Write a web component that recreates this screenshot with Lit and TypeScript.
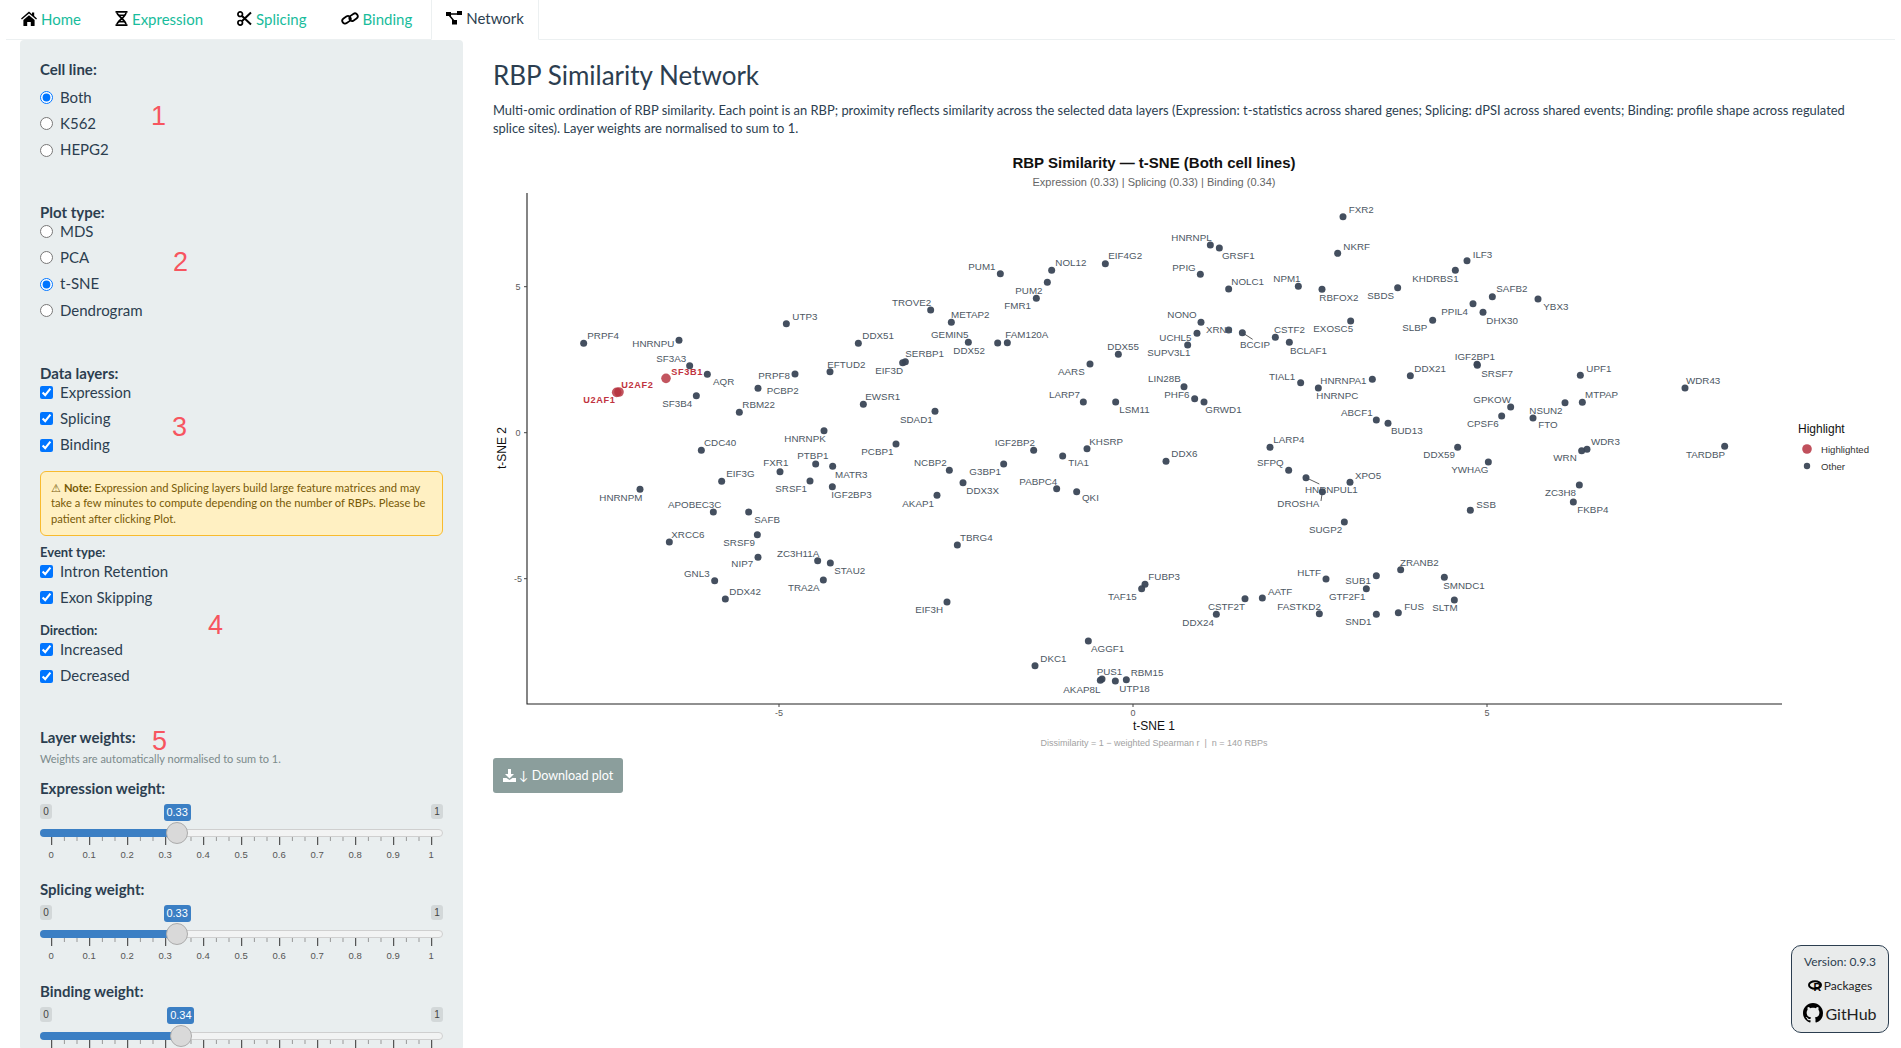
import { LitElement, html, svg, css } from 'lit';
import { customElement, property } from 'lit/decorators.js';

// [name, point x, point y, label left, label mid y]
type Row = [string, number, number, number, number];
type Spot = { name: string; x: number; y: number; lx: number; ly: number };

// values were read off 3x crops, so they get divided back down here
const spots = (ox: number, oy: number, rows: Row[]): Spot[] =>
  rows.map(([name, x, y, lx, ly]) => ({
    name,
    x: ox + x / 3,
    y: oy + y / 3,
    lx: ox + lx / 3,
    ly: oy + ly / 3,
  }));

const RED_POINTS = spots(490, 150, [
  ['SF3B1', 528, 685, 544, 666],
  ['U2AF2', 387, 726, 394, 705],
  ['U2AF1', 380, 727, 280, 750],
]);

const POINTS = [
  ...spots(490, 150, [
    ['PRPF4', 281, 580, 292, 557],
    ['HNRNPU', 567, 571, 427, 581],
    ['SF3A3', 599, 647, 499, 626],
    ['AQR', 652, 673, 669, 695],
    ['SF3B4', 619, 737, 517, 761],
    ['RBM22', 748, 787, 757, 764],
    ['PCBP2', 804, 715, 830, 722],
    ['PRPF8', 915, 672, 805, 677],
    ['UTP3', 889, 521, 907, 500],
    ['DDX51', 1105, 580, 1117, 557],
    ['EFTUD2', 1020, 665, 1012, 644],
    ['EIF3D', 1238, 638, 1156, 662],
    ['SERBP1', 1246, 635, 1246, 611],
    ['TROVE2', 1322, 480, 1206, 458],
    ['METAP2', 1384, 517, 1383, 494],
    ['GEMIN5', 1435, 577, 1323, 554],
    ['DDX52', 1523, 579, 1390, 602],
    ['EWSR1', 1120, 763, 1126, 740],
    ['SDAD1', 1335, 784, 1230, 809],
    ['HNRNPK', 1002, 842, 883, 866],
    ['CDC40', 634, 901, 642, 878],
  ]),
  ...spots(490, 440, [
    ['PCBP1', 1218, 12, 1114, 35],
    ['NCBP2', 1378, 91, 1272, 68],
    ['FXR1', 870, 95, 820, 68],
    ['PTBP1', 977, 72, 922, 47],
    ['MATR3', 1028, 79, 1035, 104],
    ['EIF3G', 695, 124, 709, 101],
    ['SRSF1', 960, 123, 856, 146],
    ['IGF2BP3', 1027, 140, 1024, 164],
    ['HNRNPM', 450, 148, 328, 173],
    ['APOBEC3C', 670, 216, 534, 194],
    ['SAFB', 776, 216, 793, 239],
    ['AKAP1', 1341, 166, 1237, 189],
    ['XRCC6', 538, 306, 544, 284],
    ['SRSF9', 802, 284, 700, 308],
    ['NIP7', 804, 352, 724, 371],
    ['ZC3H11A', 983, 362, 861, 339],
    ['STAU2', 1021, 369, 1033, 392],
    ['TRA2A', 1000, 420, 894, 443],
    ['GNL3', 674, 422, 582, 401],
    ['DDX42', 706, 477, 718, 455],
    ['EIF3H', 1371, 486, 1276, 509],
    ['TBRG4', 1402, 315, 1410, 293],
  ]),
  ...spots(960, 430, [
    ['G3BP1', 131, 102, 28, 125],
    ['DDX3X', 9, 158, 19, 182],
    ['IGF2BP2', 221, 61, 104, 38],
    ['KHSRP', 381, 56, 388, 35],
    ['TIA1', 308, 78, 325, 98],
    ['PABPC4', 290, 176, 178, 155],
    ['QKI', 350, 185, 366, 203],
    ['DDX6', 618, 94, 634, 71],
    ['LARP4', 930, 52, 940, 29],
    ['SFPQ', 986, 121, 891, 98],
    ['HNRNPUL1', 1038, 143, 1035, 179],
    ['DROSHA', 1087, 185, 952, 221],
    ['XPO5', 1170, 157, 1185, 137],
    ['SUGP2', 1153, 276, 1047, 299],
    ['DDX59', 1493, 52, 1390, 74],
    ['FUBP3', 555, 463, 565, 440],
    ['TAF15', 545, 476, 444, 500],
    ['ZRANB2', 1322, 419, 1320, 398],
    ['HLTF', 1098, 447, 1012, 428],
    ['SUB1', 1249, 437, 1156, 452],
    ['SMNDC1', 1453, 442, 1450, 467],
    ['GTF2F1', 1219, 476, 1107, 500],
    ['AATF', 907, 504, 924, 485],
    ['CSTF2T', 855, 506, 744, 530],
    ['FASTKD2', 1078, 551, 952, 530],
    ['SLTM', 1483, 510, 1417, 533],
    ['FUS', 1315, 548, 1333, 530],
    ['SND1', 1249, 553, 1156, 575],
    ['DDX24', 769, 553, 667, 578],
    ['AGGF1', 385, 633, 393, 656],
    ['DKC1', 225, 707, 241, 686],
    ['PUS1', 426, 747, 410, 725],
    ['AKAP8L', 421, 751, 310, 777],
    ['RBM15', 499, 749, 512, 728],
    ['UTP18', 466, 753, 478, 776],
  ]),
  ...spots(960, 150, [
    ['FXR2', 1149, 200, 1166, 179],
    ['NKRF', 1133, 310, 1150, 290],
    ['HNRNPL', 751, 285, 634, 263],
    ['GRSF1', 778, 294, 786, 317],
    ['EIF4G2', 436, 341, 445, 317],
    ['PUM1', 121, 371, 25, 350],
    ['NOL12', 275, 361, 286, 338],
    ['PUM2', 262, 397, 166, 422],
    ['FMR1', 229, 445, 133, 467],
    ['PPIG', 721, 373, 637, 353],
    ['NOLC1', 806, 417, 814, 395],
    ['NPM1', 1015, 409, 940, 386],
    ['RBFOX2', 1086, 418, 1078, 442],
    ['SBDS', 1313, 413, 1222, 437],
    ['KHDRBS1', 1486, 361, 1357, 386],
    ['EXOSC5', 1172, 513, 1060, 536],
    ['SLBP', 1418, 511, 1327, 533],
    ['NONO', 723, 517, 622, 494],
    ['XRN2', 806, 540, 738, 539],
    ['UCHL5', 711, 550, 598, 563],
    ['BCCIP', 847, 548, 840, 584],
    ['SUPV3L1', 683, 585, 562, 608],
    ['CSTF2', 946, 562, 942, 539],
    ['BCLAF1', 988, 577, 990, 602],
    ['FAM120A', 142, 578, 136, 554],
    ['DDX55', 475, 613, 442, 590],
    ['AARS', 390, 642, 294, 665],
    ['LIN28B', 672, 710, 564, 686],
    ['PHF6', 704, 746, 613, 734],
    ['GRWD1', 732, 756, 736, 779],
    ['LARP7', 370, 756, 267, 734],
    ['LSM11', 467, 756, 478, 779],
    ['TIAL1', 1022, 698, 927, 678],
    ['HNRNPA1', 1237, 688, 1081, 692],
    ['HNRNPC', 1075, 714, 1069, 737],
    ['DDX21', 1351, 677, 1363, 656],
    ['ABCF1', 1249, 810, 1143, 788],
    ['BUD13', 1284, 820, 1293, 842],
  ]),
  ...spots(1420, 200, [
    ['ILF3', 141, 182, 158, 164],
    ['SAFB2', 217, 290, 229, 266],
    ['YBX3', 354, 297, 370, 320],
    ['PPIL4', 159, 311, 64, 335],
    ['DHX30', 189, 337, 199, 362],
    ['IGF2BP1', 171, 493, 104, 470],
    ['SRSF7', 172, 496, 184, 521],
    ['UPF1', 481, 526, 499, 506],
    ['WDR43', 795, 564, 798, 542],
    ['MTPAP', 487, 607, 495, 584],
    ['NSUN2', 435, 608, 328, 632],
    ['GPKOW', 272, 621, 160, 599],
    ['CPSF6', 245, 648, 141, 671],
    ['FTO', 339, 654, 355, 674],
    ['WDR3', 501, 748, 513, 725],
    ['WRN', 485, 752, 400, 773],
    ['TARDBP', 914, 739, 798, 764],
    ['YWHAG', 205, 786, 94, 809],
    ['ZC3H8', 478, 855, 375, 878],
    ['FKBP4', 460, 906, 472, 929],
    ['SSB', 151, 931, 169, 914],
  ]),
];

const LEADERS = [
  [960 + 847 / 3, 150 + 548 / 3, 960 + 878 / 3, 150 + 568 / 3],
  [960 + 1038 / 3, 430 + 143 / 3, 960 + 1078 / 3, 430 + 162 / 3],
  [960 + 1087 / 3, 430 + 185 / 3, 960 + 1083 / 3, 430 + 213 / 3],
];

@customElement('rbp-plot')
export class RbpPlot extends LitElement {
  static styles = css`
    :host { display: block; height: 600px; }
    svg { display: block; font-family: 'Liberation Sans', Arial, sans-serif; }
    text { dominant-baseline: central; }
    .lab { font-size: 9.8px; fill: #4d5763; }
    .lab-red { font-size: 9.2px; font-weight: 700; fill: #bf3340; letter-spacing: 0.6px; }
    .tick { font-size: 9px; fill: #5a5a5a; text-anchor: middle; }
    .axis-title { font-size: 12px; fill: #111; text-anchor: middle; }
    .title { font-size: 15px; font-weight: 700; fill: #111; text-anchor: middle; }
    .sub { font-size: 11px; fill: #666; text-anchor: middle; }
    .caption { font-size: 9px; fill: #a2a2a2; text-anchor: middle; }
    .legend { font-size: 9.6px; fill: #333; }
  `;

  render() {
    return html`
      <svg width="1400" height="600" viewBox="493 150 1400 600">
        <text class="title" x="1154" y="162.5">RBP Similarity — t-SNE (Both cell lines)</text>
        <text class="sub" x="1154" y="182">Expression (0.33) | Splicing (0.33) | Binding (0.34)</text>

        <path d="M527 193V704H1782" fill="none" stroke="#222" stroke-width="1.1" />
        ${[[5, 286.7], [0, 432.7], [-5, 578.7]].map(
          ([v, y]) => svg`
            <line x1="524" x2="527" y1=${y} y2=${y} stroke="#444" />
            <text class="tick" x="518" y=${y}>${v}</text>`,
        )}
        ${[[-5, 779], [0, 1133], [5, 1487]].map(
          ([v, x]) => svg`
            <line x1=${x} x2=${x} y1="704" y2="707" stroke="#444" />
            <text class="tick" x=${x} y="713">${v}</text>`,
        )}
        <text class="axis-title" x="1154" y="726">t-SNE 1</text>
        <text class="axis-title" transform="translate(502 448) rotate(-90)">t-SNE 2</text>
        <text class="caption" x="1154" y="743">Dissimilarity = 1 − weighted Spearman r &nbsp;|&nbsp; n = 140 RBPs</text>

        ${LEADERS.map(
          ([x1, y1, x2, y2]) => svg`<line x1=${x1} y1=${y1} x2=${x2} y2=${y2} stroke="#333" stroke-width="0.8" />`,
        )}
        ${POINTS.map(
          (p) => svg`
            <circle cx=${p.x} cy=${p.y} r="3.5" fill="#3a4656" fill-opacity="0.95" />
            <text class="lab" x=${p.lx} y=${p.ly}>${p.name}</text>`,
        )}
        ${RED_POINTS.map(
          (p) => svg`
            <circle cx=${p.x} cy=${p.y} r="4.8" fill="#b5303c" fill-opacity="0.82" />
            <text class="lab-red" x=${p.lx} y=${p.ly}>${p.name}</text>`,
        )}

        <text x="1798" y="429" style="font-size:12px" fill="#111">Highlight</text>
        <circle cx="1807" cy="449" r="4.8" fill="#c0505c" />
        <circle cx="1807" cy="466" r="3.2" fill="#46505f" />
        <text class="legend" x="1821" y="449.5">Highlighted</text>
        <text class="legend" x="1821" y="466.5">Other</text>
      </svg>
    `;
  }
}

@customElement('weight-slider')
export class WeightSlider extends LitElement {
  @property() label = '';
  @property({ type: Number }) value = 0;

  static styles = css`
    :host { display: block; margin-top: 12px; }
    .name {
      height: 20px; line-height: 18.5px;
      font-size: 15px; font-weight: 700; color: #2c3e50;
      margin-bottom: 5px;
    }
    .body { position: relative; height: 64.5px; font-family: 'Liberation Sans', Arial, sans-serif; }
    .chip {
      position: absolute; top: 0;
      width: 12px; height: 15px; line-height: 15px;
      text-align: center; font-size: 10px; color: #444;
      background: #d3d8d9; border-radius: 3px;
    }
    .track {
      position: absolute; left: 0; right: 0; top: 25px; height: 8px;
      box-sizing: border-box;
      background: #f2f3f3; border: 1px solid #cfcfcf; border-radius: 4px;
    }
    .fill {
      position: absolute; left: 0; top: 25px; height: 8px;
      background: #3b7fc4; border-radius: 4px 0 0 4px;
    }
    .bubble {
      position: absolute; top: 0;
      width: 27px; height: 17px; line-height: 17px;
      margin-left: -13.5px;
      text-align: center; font-size: 11px; color: #fff;
      background: #3b7fc4; border-radius: 3px;
    }
    .handle {
      position: absolute; top: 18px;
      width: 22px; height: 22px; margin-left: -11px;
      box-sizing: border-box;
      background: #d9d9d9; border: 1px solid #ababab; border-radius: 50%;
    }
    svg { position: absolute; left: 0; top: 33px; }
    text { font-size: 9.5px; fill: #555; text-anchor: middle; }
  `;

  render() {
    const pos = 11.7 + 380 * this.value;
    const majors = Array.from({ length: 11 }, (_, i) => i);
    return html`
      <div class="name">${this.label}</div>
      <div class="body">
        <span class="chip" style="left:0">0</span>
        <span class="chip" style="right:0">1</span>
        <span class="bubble" style="left:${pos}px">${this.value.toFixed(2)}</span>
        <div class="track"></div>
        <div class="fill" style="width:${pos}px"></div>
        <svg width="403" height="30">
          ${majors.map((i) => {
            const x = 11.7 + i * 38;
            return svg`
              <line x1=${x} x2=${x} y1="0" y2="8" stroke="#333" />
              ${i < 10
                ? svg`
                    <line x1=${x + 12.7} x2=${x + 12.7} y1="0" y2="4" stroke="#999" />
                    <line x1=${x + 25.3} x2=${x + 25.3} y1="0" y2="4" stroke="#999" />`
                : ''}
              <text x=${x - 0.5} y="21">${i === 0 ? '0' : i === 10 ? '1' : (i / 10).toFixed(1)}</text>`;
          })}
        </svg>
        <div class="handle" style="left:${pos}px"></div>
      </div>
    `;
  }
}

const homeIcon = html`<svg class="ic" width="16" height="15" viewBox="0 0 16 15"><path d="M8 .6 11 3.2V1.5h2.2v3.6L16 7.6l-.9 1L8 2.5.9 8.6 0 7.6ZM2.4 9 8 4.2 13.6 9v5.4a.6.6 0 0 1-.6.6H9.8v-4H6.2v4H3a.6.6 0 0 1-.6-.6Z" /></svg>`;
const dnaIcon = html`<svg class="ic" width="13" height="15" viewBox="0 0 13 15"><path d="M.5 0h12v1.8H.5ZM.5 13.2h12V15H.5Z" /><path d="M2 1.5c0 3.5 9 7.500 9 12M11 1.500c0 4.500-9 8.500-9 12" fill="none" stroke="#000" stroke-width="1.700" /><path d="M3 3.500h7v1.400H3ZM3 10h7v1.400H3Z" /></svg>`;
const scissorsIcon = html`<svg class="ic" width="15" height="15" viewBox="0 0 15 15"><circle cx="3.200" cy="3.200" r="2.300" fill="none" stroke="#000" stroke-width="1.700" /><circle cx="3.200" cy="11.800" r="2.300" fill="none" stroke="#000" stroke-width="1.700" /><path d="M4.800 4.800 14 13.500M4.800 10.200 14 1.500" stroke="#000" stroke-width="2" /></svg>`;
const linkIcon = html`<svg class="ic" width="18" height="15" viewBox="0 0 18 15"><g fill="none" stroke="#000" stroke-width="1.800"><rect x="1" y="6" width="9" height="5.600" rx="2.800" transform="rotate(-35 5.500 8.800)" /><rect x="8" y="3.400" width="9" height="5.600" rx="2.800" transform="rotate(-35 12.500 6.200)" /></g></svg>`;
const networkIcon = html`<svg class="ic" width="16" height="14" viewBox="0 0 16 14"><path d="M0 1h5v4H0ZM11 0h5v4h-5ZM6 9h5v4.500H6Z" /><path d="M4 3h8M3 4l5 6" stroke="#000" stroke-width="1.500" fill="none" /></svg>`;
const downloadIcon = html`<svg width="13" height="13" viewBox="0 0 13 13" fill="#fff"><path d="M5 0h3v5h3L6.500 9.500 2 5h3ZM0 9h3.500l3 2 3-2H13v4H0Z" /></svg>`;
const githubIcon = html`<svg width="20" height="20" viewBox="0 0 16 16"><path d="M8 0C3.580 0 0 3.580 0 8c0 3.540 2.290 6.530 5.470 7.590.4.070.55-.17.55-.38 0-.19-.01-.82-.01-1.490-2.010.37-2.530-.49-2.690-.94-.09-.23-.48-.94-.82-1.130-.28-.15-.68-.52-.01-.53.63-.01 1.080.58 1.230.82.720 1.210 1.870.87 2.330.66.070-.52.28-.87.51-1.070-1.780-.2-3.640-.89-3.640-3.950 0-.87.31-1.590.82-2.150-.08-.2-.36-1.020.08-2.120 0 0 .67-.21 2.200.82.64-.18 1.320-.27 2-.27.68 0 1.360.09 2 .27 1.530-1.040 2.200-.82 2.200-.82.44 1.100.16 1.920.08 2.120.51.56.82 1.270.82 2.150 0 3.070-1.870 3.750-3.650 3.950.29.25.54.73.54 1.480 0 1.070-.01 1.930-.01 2.200 0 .21.15.46.55.38A8.013 8.013 0 0 0 16 8c0-4.420-3.580-8-8-8z" /></svg>`;
const rIcon = html`<svg width="15" height="12" viewBox="0 0 15 12"><ellipse cx="7" cy="5" rx="6" ry="3.800" fill="none" stroke="#000" stroke-width="2" /><text x="5.500" y="11" font-size="10.500" font-weight="700" font-family="Liberation Sans, sans-serif">R</text></svg>`;

const TABS = [
  { label: 'Home', icon: homeIcon },
  { label: 'Expression', icon: dnaIcon },
  { label: 'Splicing', icon: scissorsIcon },
  { label: 'Binding', icon: linkIcon },
  { label: 'Network', icon: networkIcon, active: true },
];

@customElement('app-root')
export class AppRoot extends LitElement {
  static styles = css`
    :host {
      display: block;
      height: 1048px;
      overflow: hidden;
      position: relative;
      background: #fff;
      font-family: Lato, 'Noto Sans', sans-serif;
      color: #2c3e50;
    }
    .nav {
      display: flex;
      height: 39px;
      margin: 0 6px 0 6px;
      border-bottom: 1px solid #ecf0f1;
      gap: 4px;
    }
    .tab {
      display: flex;
      align-items: center;
      gap: 4px;
      box-sizing: border-box;
      height: 39px;
      padding: 0 15px 2px;
      font-size: 15px;
      color: #18bc9c;
    }
    .tab.active {
      color: #2c3e50;
      height: 40px;
      padding: 0 14px 3px;
      background: #fff;
      border: 1px solid #ecf0f1;
      border-bottom-color: #fff;
      border-top: 0;
    }
    .ic { flex: none; }

    .layout { display: flex; gap: 30px; }
    .side {
      position: relative;
      flex: none;
      box-sizing: border-box;
      width: 443px;
      height: 1010px;
      margin-left: 20px;
      padding: 20px 20px 0;
      background: #e9eeef;
      border-radius: 4px;
      overflow: hidden;
    }
    .lbl { height: 20px; line-height: 18.5px; font-size: 15px; font-weight: 700; }
    .lbl.sm { height: 18px; line-height: 17px; font-size: 13px; }
    .opt {
      display: flex;
      align-items: center;
      gap: 7px;
      height: 26.3px;
      font-size: 15px;
    }
    .opt input { margin: 0; width: 13px; height: 13px; flex: none; }
    .opt span { margin-top: -2px; }
    .cell { margin-bottom: 4.5px; }
    .gap-plot { margin-top: 39.3px; margin-bottom: -4.2px; }
    .gap-data { margin-top: 40px; margin-bottom: -4.2px; }
    .note {
      box-sizing: border-box;
      margin-top: 12.6px;
      height: 65px;
      padding: 8px 10px 0;
      font-size: 11.2px;
      line-height: 15.5px;
      color: #775a06;
      background: #fff0c2;
      border: 1px solid #f8bb2e;
      border-radius: 6px;
    }
    .event { margin-top: 8px; margin-bottom: -3.5px; }
    .direction { margin-top: 10.9px; margin-bottom: -3.2px; }
    .weights { margin-top: 38.2px; }
    .help { margin-top: 3.3px; height: 16px; line-height: 16px; font-size: 11px; color: #7b8a8b; }
    .num {
      position: absolute;
      font-family: 'Liberation Sans', Arial, sans-serif;
      font-size: 27px;
      line-height: 30px;
      color: #f7555f;
    }

    .main { flex: 1; min-width: 0; }
    h2 {
      margin: 19px 0 0;
      height: 32px;
      line-height: 32px;
      font-size: 26px;
      font-weight: 400;
    }
    p {
      margin: 9.5px 30px 0 0;
      font-size: 12.92px;
      line-height: 18px;
    }
    .plot { margin-top: 13.5px; }
    .btn {
      display: inline-flex;
      align-items: center;
      gap: 3px;
      box-sizing: border-box;
      height: 35px;
      margin-top: 8px;
      padding: 0 10px;
      font-size: 12.6px;
      color: #fff;
      background: #8b9e9c;
      border-radius: 3px;
    }

    .version {
      position: absolute;
      right: 12px;
      top: 945px;
      box-sizing: border-box;
      width: 98px;
      height: 88px;
      padding-top: 8px;
      display: flex;
      flex-direction: column;
      align-items: center;
      font-size: 12px;
      color: #2c3e50;
      background: #e9ebeb;
      border: 1px solid #2c3e50;
      border-radius: 10px;
    }
    .version span { display: flex; align-items: center; color: #222; }
    .pk { gap: 1px; margin-top: 9px; }
    .gh { gap: 2px; margin-top: 10px; font-size: 16px; }
  `;

  private options(type: string, name: string, items: string[], selected: string[]) {
    return items.map(
      (item) => html`
        <label class="opt">
          <input type=${type} name=${name} .checked=${selected.includes(item)} />
          <span>${item}</span>
        </label>
      `,
    );
  }

  render() {
    return html`
      <nav class="nav">
        ${TABS.map(
          (t) => html`<div class="tab ${t.active ? 'active' : ''}">${t.icon}${t.label}</div>`,
        )}
      </nav>
      <div class="layout">
        <aside class="side">
          <div class="lbl cell">Cell line:</div>
          ${this.options('radio', 'cell', ['Both', 'K562', 'HEPG2'], ['Both'])}
          <div class="lbl gap-plot">Plot type:</div>
          ${this.options('radio', 'plot', ['MDS', 'PCA', 't-SNE', 'Dendrogram'], ['t-SNE'])}
          <div class="lbl gap-data">Data layers:</div>
          ${this.options('checkbox', 'layers', ['Expression', 'Splicing', 'Binding'], ['Expression', 'Splicing', 'Binding'])}
          <div class="note">
            ⚠ <b>Note:</b> Expression and Splicing layers build large feature matrices and may
            take a few minutes to compute depending on the number of RBPs. Please be patient
            after clicking Plot.
          </div>
          <div class="lbl sm event">Event type:</div>
          ${this.options('checkbox', 'event', ['Intron Retention', 'Exon Skipping'], ['Intron Retention', 'Exon Skipping'])}
          <div class="lbl sm direction">Direction:</div>
          ${this.options('checkbox', 'dir', ['Increased', 'Decreased'], ['Increased', 'Decreased'])}
          <div class="lbl weights">Layer weights:</div>
          <div class="help">Weights are automatically normalised to sum to 1.</div>
          <weight-slider label="Expression weight:" value="0.33"></weight-slider>
          <weight-slider label="Splicing weight:" value="0.33"></weight-slider>
          <weight-slider label="Binding weight:" value="0.34"></weight-slider>

          <span class="num" style="left:131px;top:61px">1</span>
          <span class="num" style="left:153px;top:207px">2</span>
          <span class="num" style="left:152px;top:372px">3</span>
          <span class="num" style="left:188px;top:570px">4</span>
          <span class="num" style="left:132px;top:686px">5</span>
        </aside>
        <main class="main">
          <h2>RBP Similarity Network</h2>
          <p>
            Multi-omic ordination of RBP similarity. Each point is an RBP; proximity reflects
            similarity across the selected data layers (Expression: t-statistics across shared
            genes; Splicing: dPSI across shared events; Binding: profile shape across regulated
            splice sites). Layer weights are normalised to sum to 1.
          </p>
          <rbp-plot class="plot"></rbp-plot>
          <div class="btn">${downloadIcon}<span>↓ Download plot</span></div>
        </main>
      </div>
      <div class="version">
        Version: 0.9.3
        <span class="pk">${rIcon}Packages</span>
        <span class="gh">${githubIcon}GitHub</span>
      </div>
    `;
  }
}
